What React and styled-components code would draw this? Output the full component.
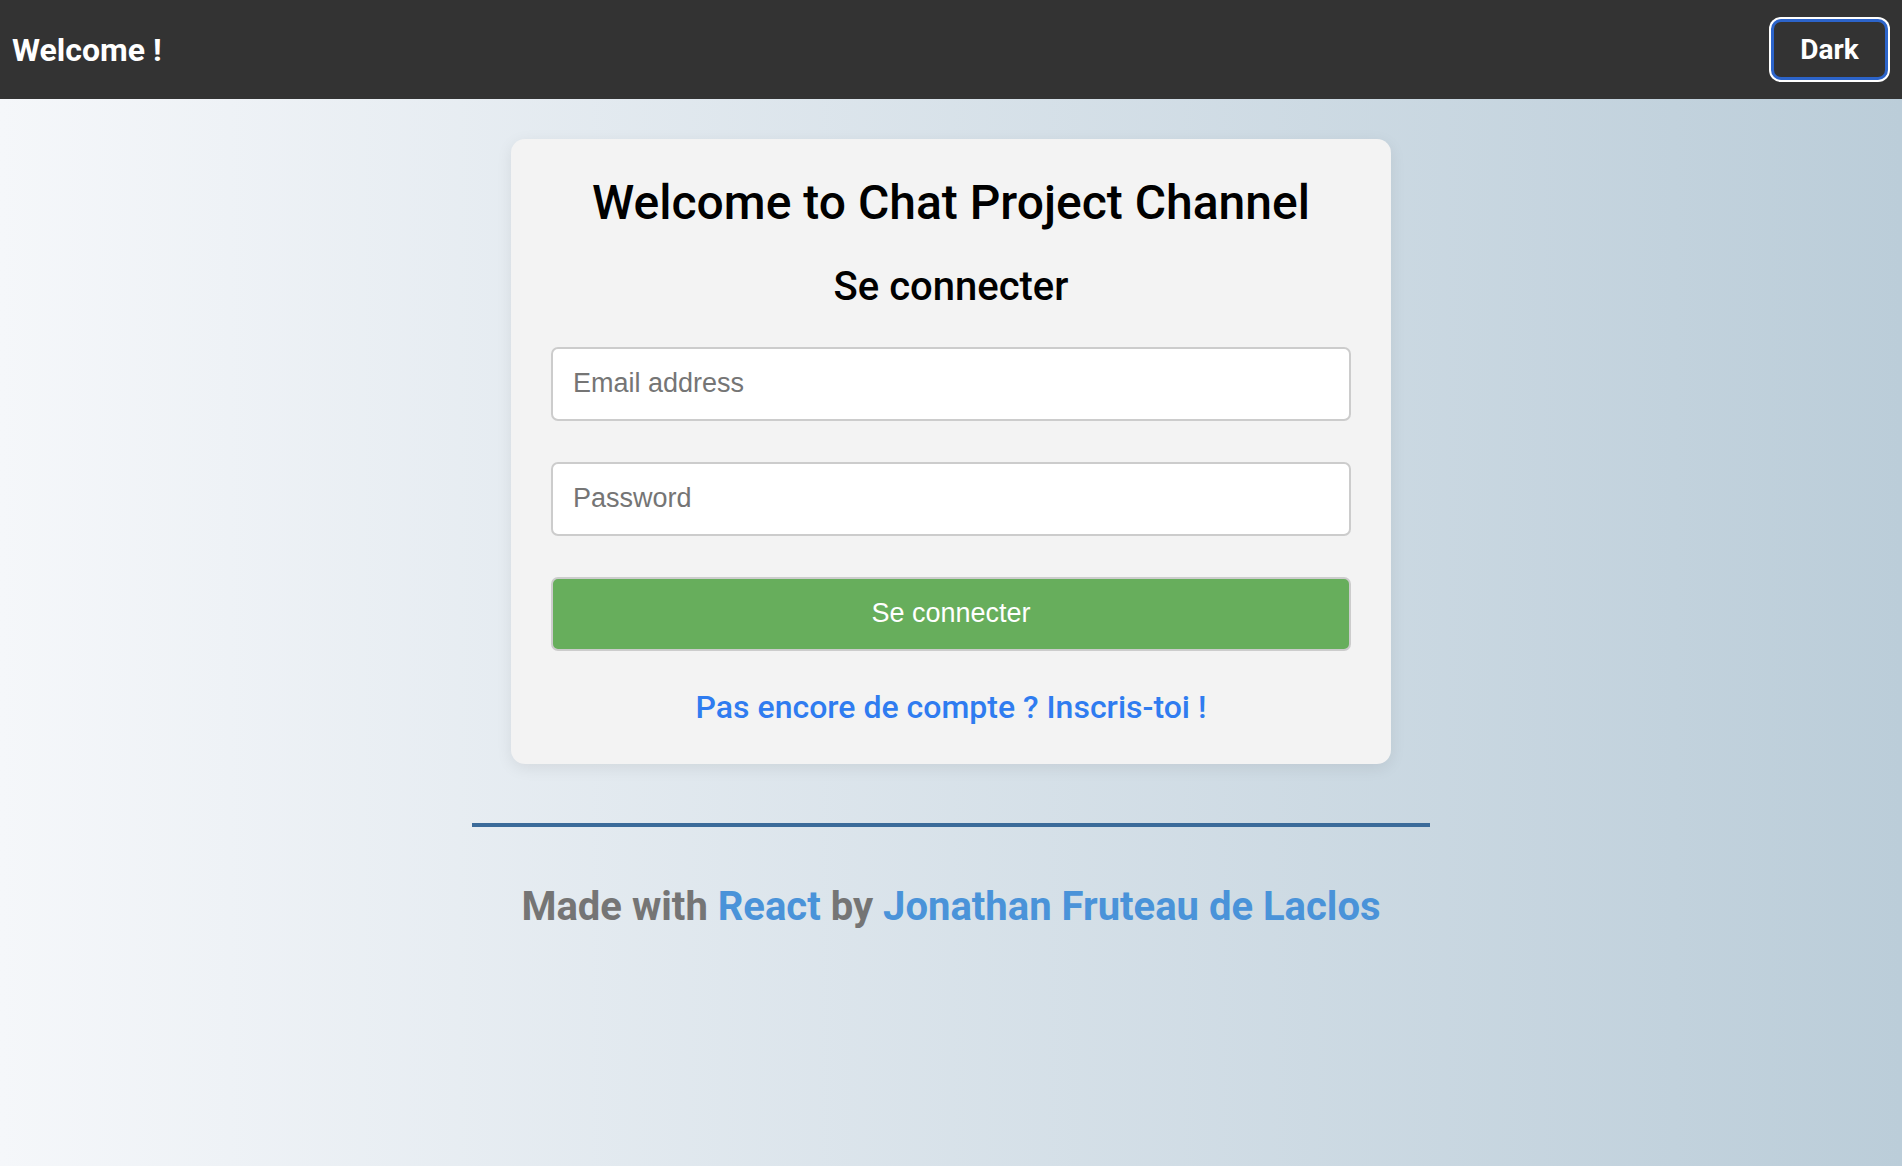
import React from "react";
import styled, { createGlobalStyle } from "styled-components";

const GlobalStyle = createGlobalStyle`
  * { box-sizing: border-box; }
  html, body { margin: 0; padding: 0; }
  body {
    font-family: Roboto, "Noto Sans", sans-serif;
    min-height: 1166px;
    background: linear-gradient(to right, #f5f7fa, #bbcdd9);
  }
`;

const Page = styled.div`
  min-height: 1166px;
  display: flex;
  flex-direction: column;
`;

const Header = styled.header`
  height: 99px;
  background: #333333;
  display: flex;
  align-items: center;
  justify-content: space-between;
  padding: 0 14px 0 12px;
`;

const Brand = styled.h1`
  margin: 0;
  color: #ffffff;
  font-size: 32px;
  font-weight: 700;
`;

const ThemeButton = styled.button`
  width: 117px;
  height: 61px;
  margin-top: -1px;
  background: #333333;
  color: #ffffff;
  font-family: Roboto, sans-serif;
  font-weight: 700;
  font-size: 28px;
  border: 3px solid #2c64ca;
  border-radius: 10px;
  box-shadow: 0 0 0 2px #ffffff;
  cursor: pointer;
`;

const Main = styled.main`
  display: flex;
  flex-direction: column;
  align-items: center;
  padding-top: 40px;
`;

const Card = styled.section`
  width: 880px;
  background: #f3f3f3;
  border-radius: 14px;
  box-shadow: 0 4px 16px rgba(0, 0, 0, 0.08);
  padding: 35px 40px 38px;
  display: flex;
  flex-direction: column;
  align-items: stretch;
`;

const Title = styled.h2`
  margin: 0;
  text-align: center;
  font-size: 48px;
  font-weight: 500;
  color: #000;
  line-height: 1.2;
`;

const Subtitle = styled.h3`
  margin: 31px 0 0;
  text-align: center;
  font-size: 40px;
  font-weight: 500;
  color: #000;
  line-height: 1.2;
`;

const Form = styled.form`
  margin-top: 36px;
  display: flex;
  flex-direction: column;
  gap: 41px;
`;

const Input = styled.input`
  height: 74px;
  width: 100%;
  border: 2px solid #cccccc;
  border-radius: 7px;
  background: #ffffff;
  padding: 0 20px;
  font-family: "Liberation Sans", Arial, sans-serif;
  font-size: 27px;
  color: #333;
  outline: none;
  &::placeholder { color: #757575; }
`;

const Submit = styled.button`
  height: 74px;
  width: 100%;
  border: 2px solid #cccccc;
  border-radius: 7px;
  background: #67ae5c;
  color: #ffffff;
  font-family: "Liberation Sans", Arial, sans-serif;
  font-size: 27px;
  cursor: pointer;
`;

const SignupLink = styled.a`
  margin-top: 37px;
  text-align: center;
  font-size: 32px;
  font-weight: 500;
  color: #2f7cf0;
  text-decoration: none;
  line-height: 1.2;
`;

const Divider = styled.hr`
  width: 958px;
  margin: 59px 0 0;
  border: none;
  height: 4px;
  background: #3b6b9a;
`;

const Footer = styled.p`
  margin: 56px 0 0;
  font-size: 40px;
  font-weight: 700;
  color: #757575;
  line-height: 1.2;
`;

const FooterLink = styled.a`
  color: #4a93d9;
  text-decoration: none;
`;

export default function App() {
  return (
    <>
      <GlobalStyle />
      <Page>
        <Header>
          <Brand>Welcome !</Brand>
          <ThemeButton>Dark</ThemeButton>
        </Header>
        <Main>
          <Card>
            <Title>Welcome to Chat Project Channel</Title>
            <Subtitle>Se connecter</Subtitle>
            <Form onSubmit={(e) => e.preventDefault()}>
              <Input type="email" placeholder="Email address" />
              <Input type="password" placeholder="Password" />
              <Submit type="submit">Se connecter</Submit>
            </Form>
            <SignupLink href="#">Pas encore de compte ? Inscris-toi !</SignupLink>
          </Card>
          <Divider />
          <Footer>
            Made with <FooterLink href="#">React</FooterLink> by{" "}
            <FooterLink href="#">Jonathan Fruteau de Laclos</FooterLink>
          </Footer>
        </Main>
      </Page>
    </>
  );
}
